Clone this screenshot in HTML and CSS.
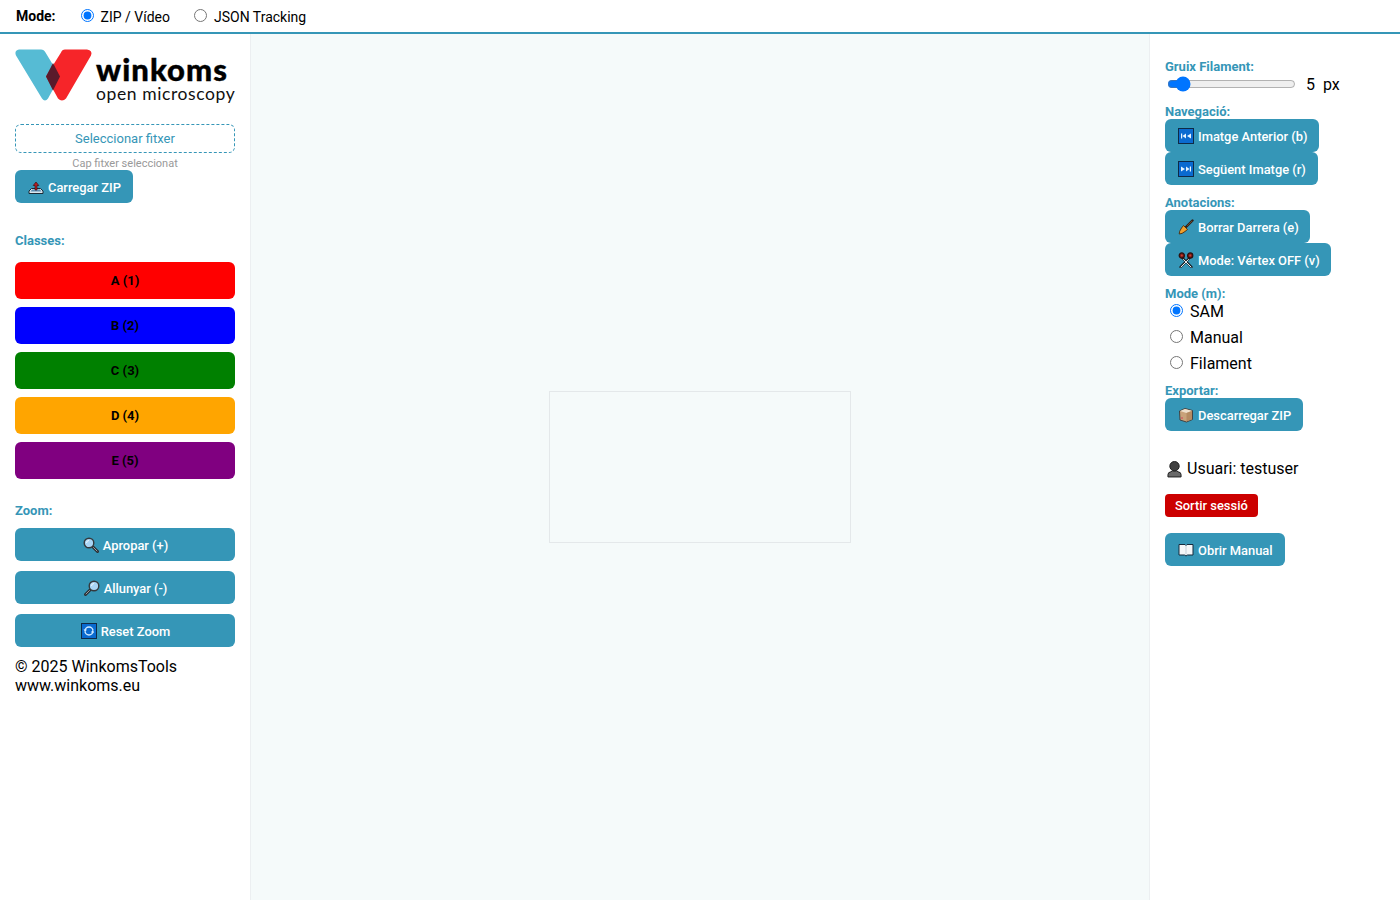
FILE: index.html
```html
<!DOCTYPE html>
<html lang="ca">
<head>
<meta charset="utf-8">
<title>WinkomsTools</title>
<link rel="stylesheet" href="styles.css">
</head>
<body>
<header class="topbar">
  <strong class="mode-title">Mode:</strong>
  <label class="top-radio first"><input type="radio" name="mode" checked> ZIP / Vídeo</label>
  <label class="top-radio"><input type="radio" name="mode"> JSON Tracking</label>
</header>
<div class="layout">
  <aside class="left">
    <div class="logo">
      <svg class="logo-mark" width="78" height="54" viewBox="0 0 78 53">
        <path fill="#56bbd4" d="M4 0H26Q29 0 30.500 3L45 27L33 49Q30 53 27 49L1 6Q-1 1 4 0Z"/>
        <path fill="#f62529" d="M50 0H72Q78 1 76 6L51 49Q47 53 43 49L31 27L46 3Q47 0 50 0Z"/>
        <path fill="#5a1a2b" d="M38 13.500L45 27L38 41L31 27Z"/>
      </svg>
      <div class="logo-text">
        <div class="logo-name">winkoms</div>
        <div class="logo-sub">open microscopy</div>
      </div>
    </div>
    <div class="file-pick">Seleccionar fitxer</div>
    <div class="file-none">Cap fitxer seleccionat</div>
    <button class="btn"><svg class="ico" viewBox="0 0 16 16"><path fill="#dbe6ee" stroke="#1b2a36" d="M3.500 9.500H12.500L15 12V14.500H1V12Z"/><path fill="#5d8fb5" d="M4 10.500H12L13.500 12.500H2.500Z"/><path fill="#b81c22" stroke="#3a1114" stroke-width=".7" d="M7 11V6.500H5.200L8 3L10.800 6.500H9V11Z"/></svg>Carregar ZIP</button>
    <div class="label classes-label">Classes:</div>
    <div class="classes">
      <button class="cls red">A (1)</button>
      <button class="cls blue">B (2)</button>
      <button class="cls green">C (3)</button>
      <button class="cls orange">D (4)</button>
      <button class="cls purple">E (5)</button>
    </div>
    <div class="label zoom-label">Zoom:</div>
    <div class="zooms">
      <button class="btn wide"><svg class="ico" viewBox="0 0 16 16"><path stroke="#2c3034" stroke-width="3" stroke-linecap="round" d="M10 10L14.500 14.500"/><path stroke="#9aa0a4" stroke-width="1" stroke-linecap="round" d="M10.500 10.500L14 14"/><circle cx="6" cy="6" r="4.800" fill="#a9d5f5" stroke="#34393d" stroke-width="1.400"/><path fill="none" stroke="#eef8ff" d="M3.500 6A2.500 2.500 0 0 1 6 3.500"/></svg>Apropar (+)</button>
      <button class="btn wide"><svg class="ico" viewBox="0 0 16 16"><path stroke="#2c3034" stroke-width="3" stroke-linecap="round" d="M6 10L1.500 14.500"/><path stroke="#9aa0a4" stroke-width="1" stroke-linecap="round" d="M5.500 10.500L2 14"/><circle cx="10" cy="6" r="4.800" fill="#a9d5f5" stroke="#34393d" stroke-width="1.400"/><path fill="none" stroke="#eef8ff" d="M7.500 6A2.500 2.500 0 0 1 10 3.500"/></svg>Allunyar (-)</button>
      <button class="btn wide"><svg class="ico" viewBox="0 0 16 16"><rect x=".5" y=".5" width="15" height="15" fill="#0a6ad0" stroke="#0e2a47"/><circle cx="8" cy="8" r="4" fill="none" stroke="#cfeaff" stroke-width="1.500"/><path fill="#0a6ad0" d="M3 7H6V8.500H3ZM10 7.500H13V9H10Z"/><path fill="#cfeaff" d="M2.500 6.500H6L4.200 9ZM9.800 9.500H13.300L11.700 7Z"/></svg>Reset Zoom</button>
    </div>
    <p class="copy">© 2025 WinkomsTools<br>www.winkoms.eu</p>
  </aside>
  <main class="center"><div class="canvas"></div></main>
  <aside class="right">
    <div class="label">Gruix Filament:</div>
    <div class="slider-row"><input class="slider" type="range" min="1" max="60" value="5"><span class="slider-val">5</span><span>px</span></div>
    <div class="label sec">Navegació:</div>
    <button class="btn"><svg class="ico" viewBox="0 0 16 16"><rect x=".5" y=".5" width="15" height="15" fill="#0a6ad0" stroke="#0e2a47"/><path fill="#e6f4ff" d="M3 5.500H4.200V10.500H3ZM8 5.500V10.500L4.500 8ZM13 5.500V10.500L9 8Z"/></svg>Imatge Anterior (b)</button>
    <button class="btn"><svg class="ico" viewBox="0 0 16 16"><rect x=".5" y=".5" width="15" height="15" fill="#0a6ad0" stroke="#0e2a47"/><path fill="#e6f4ff" d="M11.800 5.500H13V10.500H11.800ZM8 5.500V10.500L11.500 8ZM3 5.500V10.500L7 8Z"/></svg>Següent Imatge (r)</button>
    <div class="label sec">Anotacions:</div>
    <button class="btn tight"><svg class="ico" viewBox="0 0 16 16"><path stroke="#2e2018" stroke-width="2.400" stroke-linecap="round" d="M7 9L14.500 1.500"/><path stroke="#8a5a30" stroke-width=".7" d="M9 7L14 2"/><path fill="#efa02c" stroke="#4a2c10" stroke-width=".9" d="M5.500 6.500L9.500 10.500L7 12.500Q4 15 1.200 15Q1 12.500 3.500 9Z"/></svg>Borrar Darrera (e)</button>
    <button class="btn tight"><svg class="ico" viewBox="0 0 16 16"><path stroke="#1d2226" stroke-width="2.400" stroke-linecap="round" d="M4.500 6L13.500 15M11.500 6L2.500 15"/><path stroke="#e8ecee" stroke-width="1" stroke-linecap="round" d="M5.500 7.500L13 15M10.500 7.500L3 15"/><circle cx="3.800" cy="3.500" r="2.600" fill="#7d1a18" stroke="#2b0f0e" stroke-width="1.200"/><circle cx="12.200" cy="3.500" r="2.600" fill="#7d1a18" stroke="#2b0f0e" stroke-width="1.200"/><circle cx="3.800" cy="3.500" r="1" fill="#c9402e"/><circle cx="12.200" cy="3.500" r="1" fill="#c9402e"/></svg>Mode: Vértex OFF (v)</button>
    <div class="label sec">Mode (m):</div>
    <label class="side-radio first"><input type="radio" name="m" checked> SAM</label>
    <label class="side-radio"><input type="radio" name="m"> Manual</label>
    <label class="side-radio"><input type="radio" name="m"> Filament</label>
    <div class="label sec exp">Exportar:</div>
    <button class="btn"><svg class="ico" viewBox="0 0 16 16"><path fill="#c9a27a" stroke="#3a3a3a" stroke-width=".9" d="M1.500 4L7 1.500L14.500 3.500V12.500L8.500 15L2 13Z"/><path fill="#efe0cc" d="M2 4L7 2L14 3.800L8.500 6Z"/><path fill="#b58b62" d="M8.500 6L14 4V12.300L8.500 14.500Z"/><path fill="#d4415a" d="M3.500 10H4.500V12H3.500Z"/></svg>Descarregar ZIP</button>
    <div class="user"><svg class="user-ico" viewBox="0 0 16 18"><path fill="#6a6a6a" stroke="#1c1c1c" d="M1 17.500V15Q1 12.500 4 12L6 11H10L12 12Q15 12.500 15 15V17.500Z"/><circle cx="8" cy="6" r="5" fill="#404040" stroke="#1c1c1c"/></svg>Usuari: testuser</div>
    <button class="logout">Sortir sessió</button>
    <button class="btn manual"><svg class="ico" viewBox="0 0 16 16"><path fill="#f4f6f8" stroke="#142a3c" d="M1 2.500H7L8 3.500L9 2.500H15V13H9.500L8 14L6.500 13H1Z"/><path stroke="#c5d0d8" d="M8 4V13"/></svg>Obrir Manual</button>
  </aside>
</div>
</body>
</html>
```
FILE: styles.css
```css
* { box-sizing: border-box; }
html, body { margin: 0; height: 100%; }
body { font-family: Roboto, sans-serif; font-size: 16px; color: #000; background: #fff; overflow: hidden; }
.topbar { height: 34px; border-bottom: 2px solid #3596b7; display: flex; align-items: center; padding-left: 16px; font-size: 14px; }
.mode-title { font-weight: 700; }
.top-radio { display: flex; align-items: center; margin-left: 24px; gap: 7px; padding-top: 2px; }
.top-radio.first { margin-left: 25px; }
.top-radio input { margin: 0 0 4px; width: 13px; height: 13px; }
.layout { display: flex; height: 866px; }
.left { width: 250px; padding: 15px 15px 0; flex: none; }
.center { width: 900px; background: #f5fafa; border-left: 1px solid #eceff1; border-right: 1px solid #eceff1; display: flex; align-items: center; justify-content: center; flex: none; }
.canvas { width: 302px; height: 152px; border: 1px solid #e4e8ea; background: #f5fafa; }
.right { width: 250px; padding: 25px 15px 0; flex: none; display: flex; flex-direction: column; align-items: flex-start; }
.logo { height: 60px; position: relative; }
.logo-mark { display: block; }
.logo-text { position: absolute; left: 81px; top: 5px; white-space: nowrap; }
.logo-name { font-family: Lato, sans-serif; font-weight: 900; font-size: 31px; line-height: 30px; letter-spacing: 1.05px; -webkit-text-stroke: .4px #000; }
.logo-sub { font-family: Lato, sans-serif; font-size: 17.5px; line-height: 19px; letter-spacing: .6px; color: #111; }
.file-pick { margin-top: 15px; height: 29px; border: 1px dashed #3596b7; border-radius: 6px; color: #3596b7; font-size: 13px; display: flex; align-items: center; justify-content: center; }
.file-none { font-size: 11px; color: #999; text-align: center; line-height: 13px; margin-top: 4px; }
.btn { background: #3596b7; color: #fff; border: 0; border-radius: 6px; height: 33px; padding: 1px 12px 0; font: 500 12.9px Roboto, sans-serif; display: flex; align-items: center; justify-content: center; gap: 4px; white-space: nowrap; }
.btn.wide { width: 100%; }
.btn.tight { padding-right: 11px; }
.ico { width: 16px; height: 16px; flex: none; margin-left: 1px; }
.label { color: #3596b7; font-weight: 700; font-size: 13px; line-height: 15px; }
.classes-label { margin-top: 30px; }
.classes { margin-top: 14px; display: flex; flex-direction: column; gap: 8px; }
.cls { height: 37px; border: 0; border-radius: 6px; font: 700 13px Roboto, sans-serif; color: #000; }
.red { background: #ff0000; }
.blue { background: #0000ff; }
.green { background: #008000; }
.orange { background: #ffa500; }
.purple { background: #800080; }
.zoom-label { margin-top: 24px; }
.zooms { margin-top: 10px; display: flex; flex-direction: column; gap: 10px; }
.copy { margin: 10px 0 0; line-height: 19px; }
.slider-row { display: flex; align-items: center; height: 20px; }
.slider { width: 129px; margin: 0 10px 0 2px; accent-color: #0075ff; }
.slider-val { margin-right: 8px; }
.sec { margin-top: 10px; }
.side-radio { display: flex; align-items: center; height: 26px; padding-left: 5px; gap: 7px; }
.side-radio.first { height: 20px; margin-bottom: 3px; }
.side-radio input { margin: 0 0 1px; width: 13px; height: 13px; }
.exp { margin-top: 7px; }
.user { margin-top: 28px; line-height: 20px; display: flex; align-items: center; gap: 5px; padding-left: 2px; }
.user-ico { width: 15px; height: 18px; flex: none; }
.logout { margin-top: 15px; height: 23px; background: #cc0000; color: #fff; border: 0; border-radius: 4px; padding: 0 10px; font: 500 12.9px Roboto, sans-serif; }
.manual { margin-top: 16px; }
```
